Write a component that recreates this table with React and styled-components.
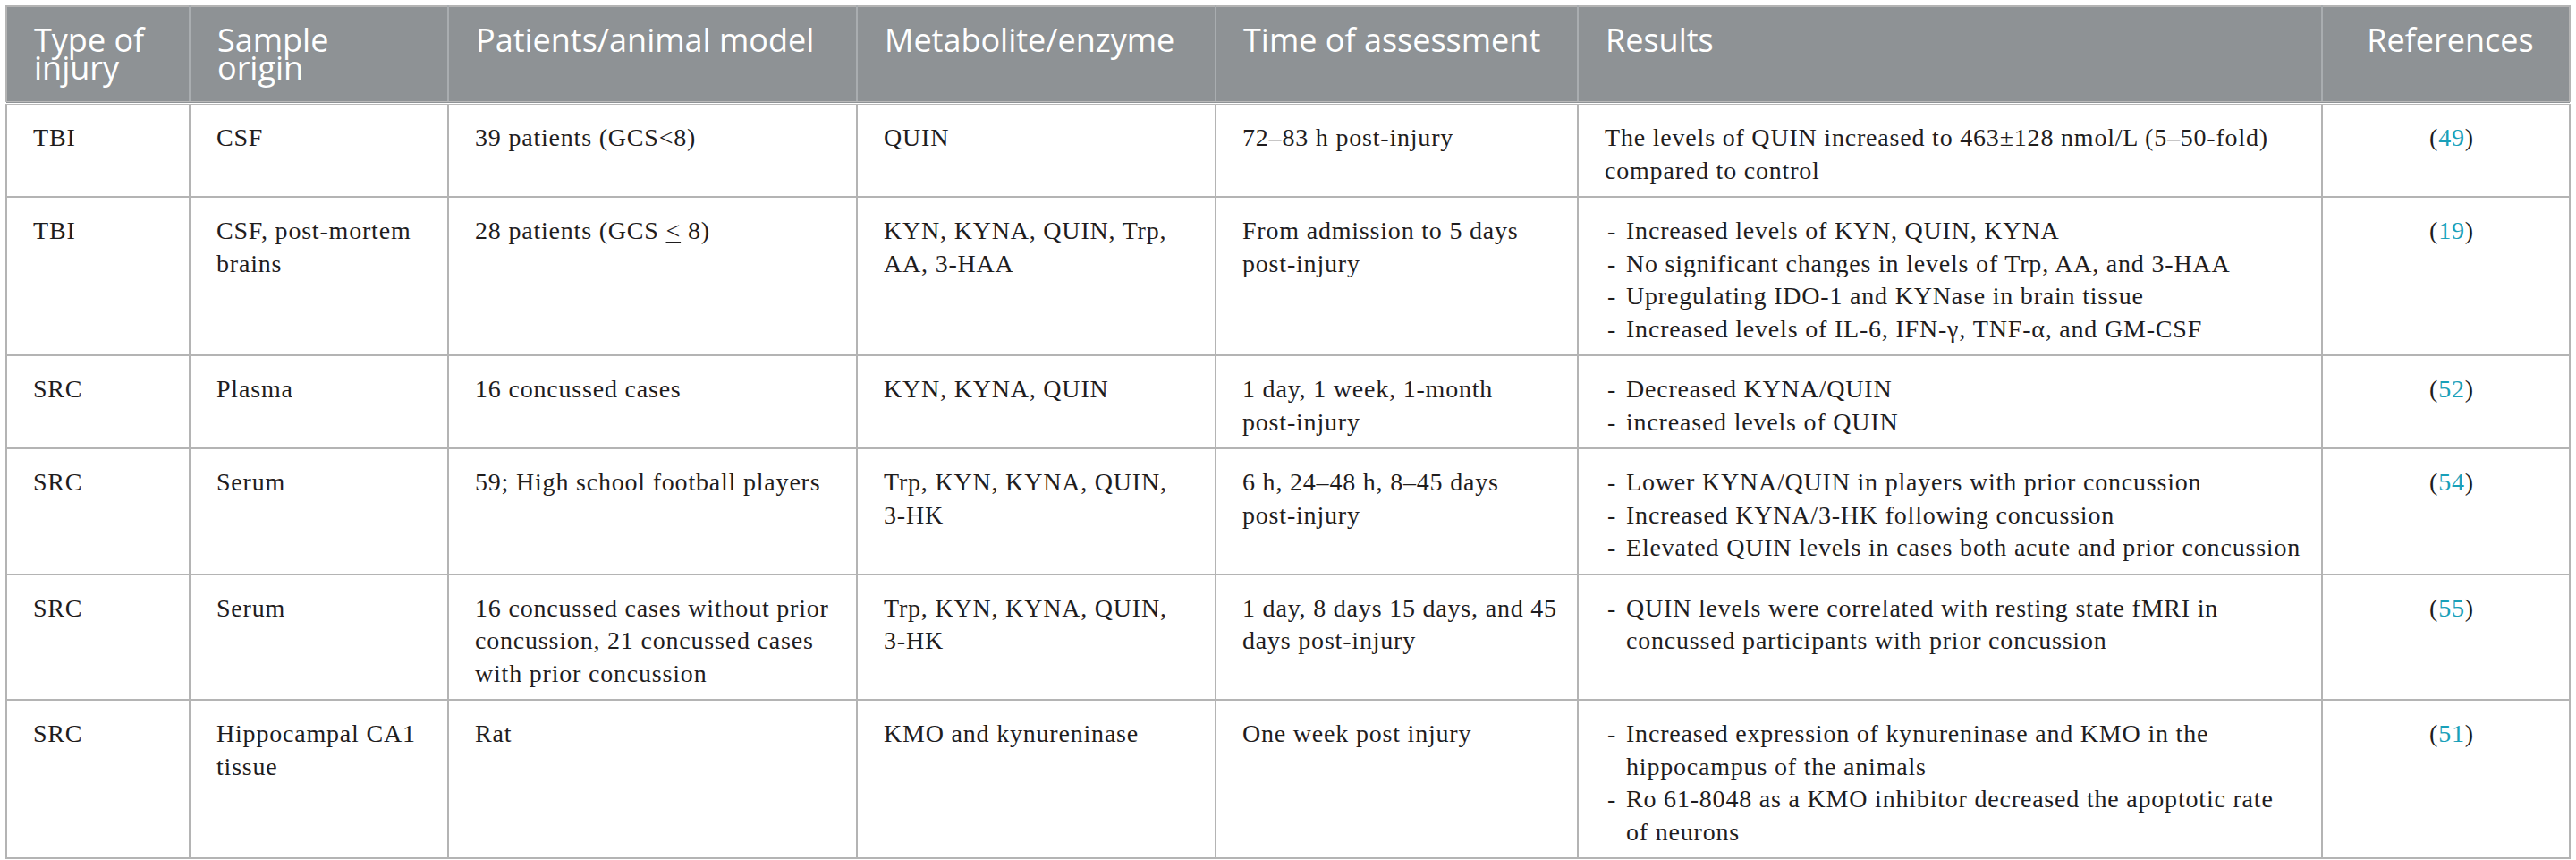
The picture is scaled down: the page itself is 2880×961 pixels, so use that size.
import React from 'react';
import styled, { createGlobalStyle } from 'styled-components';

const Global = createGlobalStyle`
  html, body {
    margin: 0;
    padding: 0;
    background: #ffffff;
  }
`;

const Page = styled.div`
  padding: 6px 8px 0 6px;
`;

const Table = styled.table`
  width: 2866px;
  table-layout: fixed;
  border-collapse: collapse;
  border: 2px solid #b4b4b4;
`;

const HeadRow = styled.tr`
  background: #8e9295;
  border-bottom: 4px double #b9b9b9;
`;

const HeadCell = styled.th`
  padding: 21px 20px 22px 30px;
  font-family: 'Open Sans', Lato, sans-serif;
  font-weight: 400;
  font-size: 36px;
  line-height: 31px;
  color: #ffffff;
  white-space: pre-line;
  text-align: ${(p) => (p.$center ? 'center' : 'left')};
  vertical-align: top;
  border-left: 2px solid #a9adb0;
  &:first-child {
    border-left: none;
  }
`;

const Row = styled.tr`
  border-top: 2px solid #b4b4b4;
`;

const Cell = styled.td`
  padding: 19px 16px 10px 29px;
  font-family: 'Liberation Serif', 'Times New Roman', serif;
  font-size: 28px;
  letter-spacing: 0.8px;
  line-height: 36.5px;
  color: #1f1d1e;
  white-space: pre-line;
  text-align: ${(p) => (p.$center ? 'center' : 'left')};
  vertical-align: top;
  border-left: 2px solid #b4b4b4;
`;

const Bullets = styled.ul`
  list-style: none;
  margin: 0;
  padding: 0;
`;

const Bullet = styled.li`
  display: flex;
`;

const Dash = styled.span`
  flex: none;
  width: 24px;
  padding-left: 3px;
  box-sizing: border-box;
`;

const RefNum = styled.span`
  color: #19a0b9;
`;

const Under = styled.span`
  text-decoration: underline;
  text-underline-offset: 3px;
`;

const widths = [205, 289, 457, 401, 405, 832, 277];

const headers = [
  'Type of\ninjury',
  'Sample\norigin',
  'Patients/animal model',
  'Metabolite/enzyme',
  'Time of assessment',
  'Results',
  'References',
];

const rows = [
  {
    type: 'TBI',
    origin: 'CSF',
    model: '39 patients (GCS<8)',
    metabolite: 'QUIN',
    time: '72–83 h post-injury',
    results: 'The levels of QUIN increased to 463±128 nmol/L (5–50-fold)\ncompared to control',
    ref: '49',
  },
  {
    type: 'TBI',
    origin: 'CSF, post-mortem\nbrains',
    model: (
      <>
        28 patients (GCS <Under>&lt;</Under> 8)
      </>
    ),
    metabolite: 'KYN, KYNA, QUIN, Trp,\nAA, 3-HAA',
    time: 'From admission to 5 days\npost-injury',
    results: [
      'Increased levels of KYN, QUIN, KYNA',
      'No significant changes in levels of Trp, AA, and 3-HAA',
      'Upregulating IDO-1 and KYNase in brain tissue',
      'Increased levels of IL-6, IFN-γ, TNF-α, and GM-CSF',
    ],
    ref: '19',
  },
  {
    type: 'SRC',
    origin: 'Plasma',
    model: '16 concussed cases',
    metabolite: 'KYN, KYNA, QUIN',
    time: '1 day, 1 week, 1-month\npost-injury',
    results: ['Decreased KYNA/QUIN', 'increased levels of QUIN'],
    ref: '52',
  },
  {
    type: 'SRC',
    origin: 'Serum',
    model: '59; High school football players',
    metabolite: 'Trp, KYN, KYNA, QUIN,\n3-HK',
    time: '6 h, 24–48 h, 8–45 days\npost-injury',
    results: [
      'Lower KYNA/QUIN in players with prior concussion',
      'Increased KYNA/3-HK following concussion',
      'Elevated QUIN levels in cases both acute and prior concussion',
    ],
    ref: '54',
  },
  {
    type: 'SRC',
    origin: 'Serum',
    model: '16 concussed cases without prior\nconcussion, 21 concussed cases\nwith prior concussion',
    metabolite: 'Trp, KYN, KYNA, QUIN,\n3-HK',
    time: '1 day, 8 days 15 days, and 45\ndays post-injury',
    results: [
      'QUIN levels were correlated with resting state fMRI in\nconcussed participants with prior concussion',
    ],
    ref: '55',
  },
  {
    type: 'SRC',
    origin: 'Hippocampal CA1\ntissue',
    model: 'Rat',
    metabolite: 'KMO and kynureninase',
    time: 'One week post injury',
    results: [
      'Increased expression of kynureninase and KMO in the\nhippocampus of the animals',
      'Ro 61-8048 as a KMO inhibitor decreased the apoptotic rate\nof neurons',
    ],
    ref: '51',
  },
];

const Results = ({ value }) =>
  Array.isArray(value) ? (
    <Bullets>
      {value.map((item) => (
        <Bullet key={item}>
          <Dash>-</Dash>
          <span>{item}</span>
        </Bullet>
      ))}
    </Bullets>
  ) : (
    value
  );

const App = () => (
  <Page>
    <Global />
    <Table>
      <colgroup>
        {widths.map((w, i) => (
          <col key={i} style={{ width: w }} />
        ))}
      </colgroup>
      <thead>
        <HeadRow>
          {headers.map((h, i) => (
            <HeadCell key={h} $center={i === headers.length - 1}>
              {h}
            </HeadCell>
          ))}
        </HeadRow>
      </thead>
      <tbody>
        {rows.map((r, i) => (
          <Row key={i}>
            <Cell>{r.type}</Cell>
            <Cell>{r.origin}</Cell>
            <Cell>{r.model}</Cell>
            <Cell>{r.metabolite}</Cell>
            <Cell>{r.time}</Cell>
            <Cell>
              <Results value={r.results} />
            </Cell>
            <Cell $center>
              (<RefNum>{r.ref}</RefNum>)
            </Cell>
          </Row>
        ))}
      </tbody>
    </Table>
  </Page>
);

export default App;
